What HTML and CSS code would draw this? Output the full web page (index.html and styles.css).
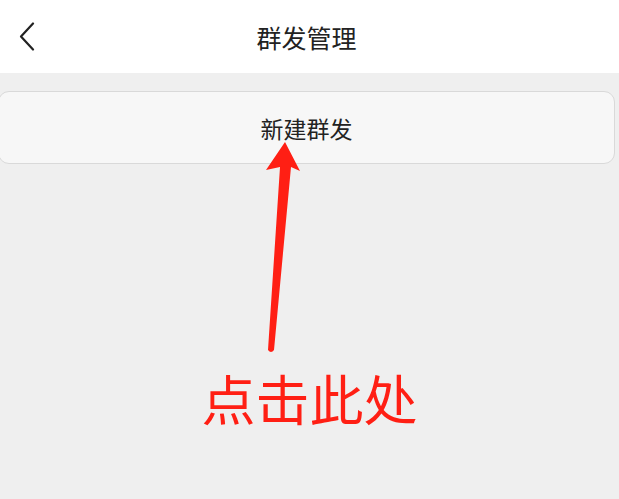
FILE: index.html
```html
<!DOCTYPE html>
<html lang="zh-CN">
<head>
  <meta charset="UTF-8" />
  <meta name="viewport" content="width=device-width, initial-scale=1.0" />
  <title>群发管理</title>
  <link rel="stylesheet" href="styles.css">
</head>
<body>
  <!-- Top bar -->
  <div class="topbar">
    <div class="back">
      <svg width="16" height="30" viewBox="0 0 16 30">
        <polyline points="14,1.5 2,14.5 14,27.5" fill="none" stroke="#222" stroke-width="2.2" stroke-linecap="round" stroke-linejoin="round" />
      </svg>
    </div>
    <div class="title">群发管理</div>
    <div></div>
  </div>

  <div class="content">
    <div class="card">新建群发</div>
    <p class="hint">点击此处</p>
  </div>

  <!-- annotation arrow -->
  <svg class="arrow" width="619" height="499" viewBox="0 0 619 499">
    <path d="M285,142 L300,171 L291,167 L274,350 Q271,354 268,350 L280,167 L266,170 Z" fill="#ff1f14" />
  </svg>
</body>
</html>
```

FILE: styles.css
```css
body {
  margin: 0;
  background-color: #efefef;
  font-family: "Noto Sans CJK SC", "Noto Sans", sans-serif;
  color: #222;
  overflow: hidden;
}

.topbar {
  display: grid;
  grid-template-columns: 60px 1fr 60px;
  align-items: center;
  height: 73px;
  background-color: #ffffff;
  padding-right: 6px;
}

.back {
  display: flex;
  align-items: center;
  padding-left: 19px;
  height: 30px;
}

.title {
  text-align: center;
  font-size: 25px;
}

.content {
  padding-top: 18px;
}

.card {
  display: flex;
  align-items: center;
  justify-content: center;
  height: 71px;
  margin: 0 4px 0 -2px;
  background-color: #f7f7f7;
  border: 1px solid #d9d9d9;
  border-radius: 11px;
  font-size: 23px;
  color: #222;
}

.hint {
  margin: 204px 0 0;
  text-align: center;
  font-size: 54px;
  line-height: 60px;
  color: #ff1f14;
}

.arrow {
  position: absolute;
  left: 0;
  top: 0;
  pointer-events: none;
}
```
